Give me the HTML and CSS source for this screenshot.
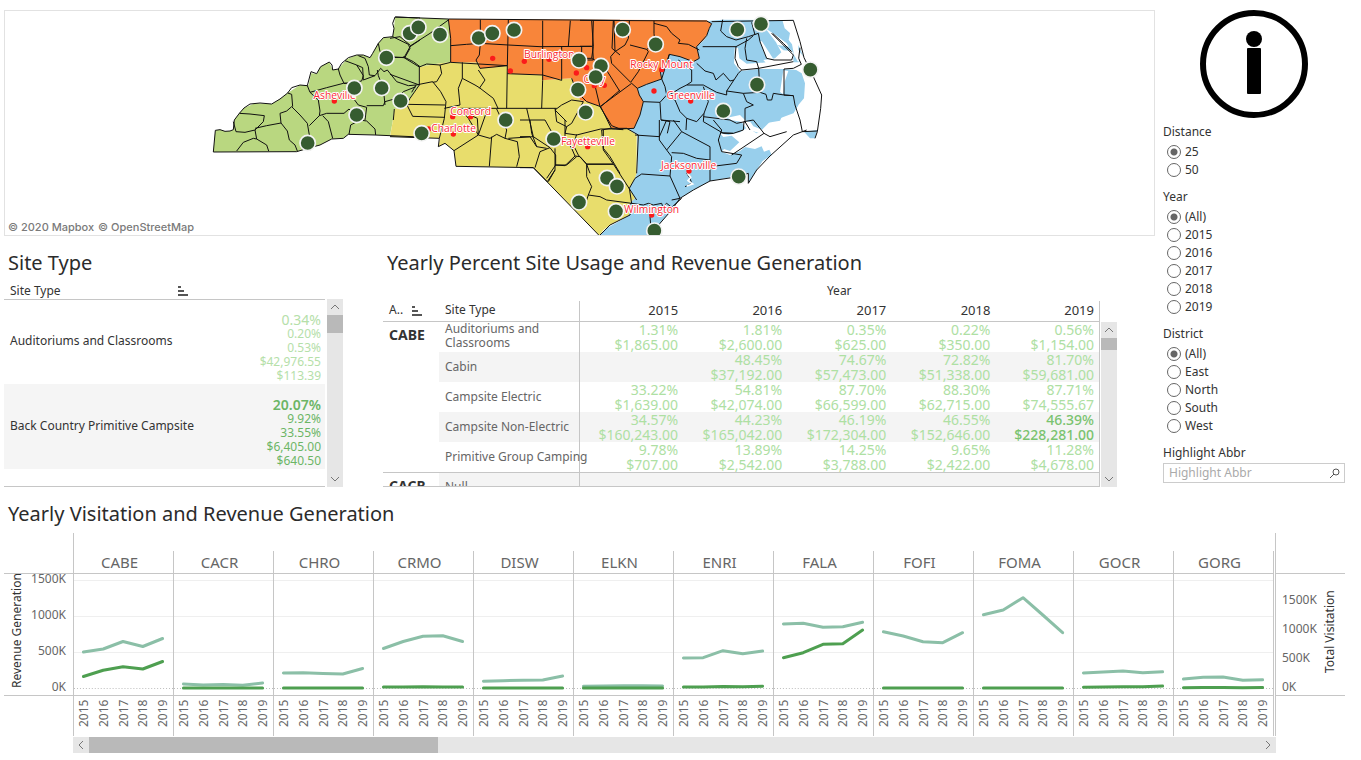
FILE: index.html
```html
<!DOCTYPE html>
<html lang="en">
<head>
<meta charset="utf-8">
<title>Park Visitation and Revenue</title>
<link rel="stylesheet" href="styles.css">
</head>
<body>
<div class="dashboard">
  <div class="main">
    <section class="map" aria-label="District map">
      <svg class="map-canvas" viewBox="15 33 3447 672" preserveAspectRatio="xMidYMid slice">
        <g class="fills">
          <path class="west" transform="translate(600 15)" d="M40 441L46 376L60 374L75 379L90 378L100 374L103 345L118 325L132 309L165 295L215 297L240 282L263 264L300 240L326 240L333 205L350 206L362 185L388 171L398 195L415 192L440 163L470 150L490 150L510 158L518 145L535 115L550 98L578 95L582 70L585 36L745 42L752 100L752 172L720 175L658 186L657 240L640 265L625 290L610 308L583 312L578 350L570 392L525 390L445 388L430 400L395 402L360 420L320 432L290 440Z"/>
          <path class="central" transform="translate(1170 15)" d="M88 186L150 175L182 172L265 172L275 190L352 182L352 206L458 210L455 226L545 220L560 250L570 285L590 290L632 305L660 355L675 374L710 370L740 390L740 505L735 520L718 550L735 580L715 600L725 613L720 630L690 645L660 660L640 675L628 692L430 488L198 484L192 437L165 415L145 425L150 400L0 395L8 350L13 312L40 308L55 290L70 265L88 240Z"/>
          <path class="north" transform="translate(1170 15)" d="M175 42L950 46L965 56L958 70L950 92L942 105L920 125L928 160L910 170L870 155L838 148L832 170L810 195L815 222L770 238L742 250L748 270L760 290L750 330L732 370L690 373L665 370L632 305L590 290L570 285L560 250L545 220L455 226L458 210L352 206L352 182L300 188L270 190L265 172L182 172L182 120Z"/>
          <path class="east" transform="translate(1740 15)" d="M380 48L395 56L388 70L380 92L372 105L350 125L358 160L340 170L300 155L268 148L262 170L240 195L245 222L200 238L172 250L178 270L190 290L180 330L162 370L140 370L172 390L172 500L165 520L148 550L165 580L145 600L155 613L145 632L115 650L80 670L60 692L220 692L240 655L275 615L300 580L340 555L390 528L475 513L505 505L505 535L530 495L548 468L575 450L568 434L552 440L545 424L525 432L490 425L520 400L560 360L575 345L600 340L640 325L655 300L672 280L675 235L665 205L640 190L660 172L655 130L640 90L640 46L428 44Z"/>
          <path class="water" transform="translate(1740 15)" d="M608 48L644 48L656 98L664 142L655 172L642 150L636 118L626 105L630 84L614 70ZM464 130L474 128L478 160L500 176L560 172L660 172L660 196L612 192L536 192L480 198L462 175ZM442 338L480 330L498 348L512 352L520 364L560 380L560 392L500 372L484 350L455 346ZM420 385L445 390L480 382L500 368L530 385L550 380L530 400L480 438L450 450L425 440L432 432L450 438L478 412L455 392L430 396ZM556 70L590 92L620 115L640 145L640 172L560 176L550 165L585 160L604 142L588 112ZM560 160L582 165L545 108L540 112ZM610 196L625 198L614 230L610 268L600 262Z"/>
          <path class="east" transform="translate(1740 15)" d="M512 348L560 354L600 347L612 320L640 325L655 300L600 262L520 270L495 330ZM672 380L712 375L705 400L690 400ZM655 120L672 158L684 180L674 160L655 135ZM592 120L630 125L634 138L610 136Z"/>
        </g>
        <g class="borders">
          <path transform="translate(600 15)" d="M40 441L46 376L60 374L75 379L90 378L100 374L103 345L118 325L132 309L150 297L180 294L215 297L240 282L263 264L275 248L300 240L322 242L333 200L350 206L362 185L388 171L396 180L398 195L415 192L425 175L445 158L470 150L490 150L510 158L518 145L535 115L550 98L578 95L582 70L578 55L585 36L660 39M40 441L290 440L330 428L360 420L395 402L430 400L445 388L525 390L570 392L660 396M118 325L150 327L193 332L190 350L165 375L135 382L108 380L100 350M165 370L200 362L243 354M165 375L170 402L200 420L206 438M110 438L130 412L160 400L170 402M243 354L240 325L260 318L275 305L300 330L322 355L328 390M243 354L262 378L268 405L285 420L292 438M263 264L275 268L278 305M322 242L330 262L355 285L360 318L358 332L328 362M330 262L380 248L430 235L440 235M358 332L380 325L432 325L447 312L465 330M368 332L385 350L398 400M447 388L452 360L480 345L500 348L525 372L527 390M415 192L420 210L432 235L462 232L485 228L490 212L470 180L435 167M475 152L495 160L505 185L508 210L525 212L542 190L552 200L562 195M470 180L488 188L490 225L525 212M535 115L540 140L560 158L615 157L630 130L625 118L578 95M562 195L590 230L625 242L648 240M500 302L550 302L555 290L590 280L610 260L648 245M460 280L475 300L500 307L495 345M580 345L583 312M630 125L660 105M560 180L578 155M610 155L640 170L660 185M532 195L535 212L550 250L555 300"/>
          <path transform="translate(1170 15)" d="M16 36L175 42L182 100L182 172M175 42L690 46M0 100L30 95L62 122L120 85L175 45M62 122L42 158L0 155M42 158L88 186L88 240L0 208M88 240L60 280L50 298L165 300M50 298L68 334L165 337M88 186L110 177L150 180L182 172L352 182M65 262L78 240L128 230L152 260L168 290L163 340L148 400L0 395M150 180L155 205L140 230L128 232M182 122L230 118L270 115L355 120L450 125L605 124M271 44L271 115L268 150L258 165L270 190L352 182L355 44M217 172L217 220L205 250L210 300L163 310M217 220L255 240L268 248L310 280L325 312M268 250L285 225L265 195M458 47L458 226L455 310M352 182L350 310M352 206L458 210L515 226L515 124M541 47L535 124M605 47L610 124L605 160L575 160L575 124M545 220L560 260L590 290L632 305L690 255M605 160L640 180L690 260M670 47L666 130L690 150M210 310L500 310M210 310L235 340L265 390L290 320L300 310M265 390L300 400L320 388L345 400L350 375L320 312M240 330L262 340L265 390L192 437L165 415L145 425L148 400M192 437L198 484L430 488L628 692M305 395L298 484M355 400L430 395L480 428L450 440L435 488M345 400L382 410L388 455L380 485M410 310L430 395M495 310L500 350L530 365L545 355L580 290L545 285L515 300L495 315L530 350M530 365L525 385L560 390L632 372L665 372L632 305M560 388L550 420L565 450L590 478L670 478M480 428L497 450L497 480L470 520M497 480L530 480L560 455M640 375L640 430L660 455L690 505M665 372L700 374M590 478L600 505"/>
          <path transform="translate(1740 15)" d="M0 46L380 48L395 56L388 70L380 92L350 125L358 160L340 170L300 155L268 148L255 190L240 195L245 222L200 238L172 250L155 235L60 305M0 124L38 124L40 47M38 124L40 165L0 165M102 47L105 140L135 120L145 100L148 48M222 48L222 85L225 120L200 133L150 120M222 55L260 65L275 85L300 105L295 115L325 118L358 135M105 140L92 155L95 175L152 232L175 200L205 140L200 133M172 250L178 270L190 290L180 330L162 370L120 372L95 362L60 305L35 200M190 290L240 292L260 270L255 245L245 222L268 148M240 292L243 345L270 350L262 385M260 275L300 250L320 240L335 230L335 195L295 165M320 240L370 240L410 262L440 270L440 258L475 205L485 195L536 190L530 170L500 165L495 130L500 100M368 125L468 125L505 105L520 92M468 125L465 160L475 185L485 195M350 175L375 198L400 205L408 225L430 205L450 228L462 225M395 50L640 46M428 44L422 78L440 95L468 105L505 95L535 85L540 110L560 160L582 165L635 165L640 150L575 85M578 85L610 115L635 140M515 52L525 90M640 46L660 110L672 158L700 215L725 270L722 310L712 380L705 400M660 128L656 160L664 178L640 190L612 192L612 270L640 272M640 170L536 190L540 262L490 265L440 258M540 262L558 268L562 285L575 285L580 265L612 270L640 272L645 300L660 345L667 380L712 378M370 245L385 290L372 325L370 350L430 385L460 385M372 325L350 350L320 340L300 320L285 285L260 275M320 340L318 375M490 265L500 290L520 300L495 310L495 350L470 355L450 345L370 335M495 350L510 375M243 345L300 350"/>
          <path transform="translate(1560 360)" d="M0 50L30 50L50 80L80 85M0 143L40 143M30 0L35 40L50 80M0 0L75 0L100 45M40 143L82 185L105 150L105 85M105 135L135 137L165 108L180 110L200 132L280 132L350 240M105 150L85 185M165 108L155 85L135 50L135 0M200 132L200 170L215 200L205 225L240 230L260 240L335 250L328 205L345 175L365 162L450 168M205 225L200 240L165 265M280 132L250 90L245 30L270 25L320 25L355 45L350 160M345 45L418 50L440 0M335 250L370 255L385 250L400 255L425 250L428 260L440 250L455 262L485 235M335 250L325 255L335 268L330 285L300 300L270 315L240 345M418 0L418 60L440 90L485 35L460 0M440 90L455 110L450 168L480 235L520 210L570 183L655 170L685 160L685 190L710 150L750 108M485 35L570 80L570 183M455 98L490 100L530 115L570 120M570 140L650 130L665 105L605 95L595 60L605 30L580 0M602 38L640 40L670 30L672 5L700 0L732 40L635 105M732 40L750 50L800 35M750 108L820 45L860 30M455 240L480 235L455 270L420 310L400 345M390 290L392 315M500 160L510 175L515 190L495 200"/>
        </g>
        <path class="lagoon" transform="translate(1560 360)" d="M502 160L512 172L504 182L518 192L500 198"/>
        <g class="cities">
          <circle cx="1003" cy="303" r="8"/><circle cx="1478" cy="175" r="8"/><circle cx="1573" cy="184" r="8"/><circle cx="1531" cy="213" r="8"/><circle cx="1647" cy="178" r="8"/><circle cx="1729" cy="219" r="8"/><circle cx="1760" cy="203" r="8"/><circle cx="1783" cy="257" r="8"/><circle cx="1813" cy="256" r="8"/><circle cx="1985" cy="209" r="8"/><circle cx="1962" cy="273" r="8"/><circle cx="2072" cy="303" r="8"/><circle cx="1358" cy="350" r="8"/><circle cx="1402" cy="333" r="8"/><circle cx="1412" cy="350" r="8"/><circle cx="1360" cy="402" r="8"/><circle cx="1286" cy="387" r="8"/><circle cx="1763" cy="440" r="8"/><circle cx="2067" cy="513" r="8"/><circle cx="1955" cy="645" r="8"/>
        </g>
        <g class="city-names">
          <text x="1004" y="298">Asheville</text><text x="1648" y="174">Burlington</text><text x="1985" y="204">Rocky Mount</text><text x="2072" y="298">Greenville</text><text x="1412" y="344">Concord</text><text x="1361" y="396">Charlotte</text><text x="1764" y="435">Fayetteville</text><text x="2066" y="507">Jacksonville</text><text x="1955" y="640">Wilmington</text><text x="1783" y="250">Cary</text>
        </g>
        <g class="sites">
          <circle cx="1229" cy="100" r="23"/><circle cx="1255" cy="82" r="23"/><circle cx="1320" cy="104" r="23"/><circle cx="1159" cy="173" r="23"/><circle cx="1063" cy="264" r="23"/><circle cx="1145" cy="264" r="23"/><circle cx="1202" cy="303" r="23"/><circle cx="1070" cy="345" r="23"/><circle cx="923" cy="429" r="23"/><circle cx="1436" cy="114" r="23"/><circle cx="1477" cy="100" r="23"/><circle cx="1542" cy="90" r="23"/><circle cx="1737" cy="181" r="23"/><circle cx="1803" cy="198" r="23"/><circle cx="1787" cy="231" r="23"/><circle cx="1734" cy="269" r="23"/><circle cx="1757" cy="337" r="23"/><circle cx="1868" cy="89" r="23"/><circle cx="1967" cy="133" r="23"/><circle cx="2212" cy="89" r="23"/><circle cx="2283" cy="72" r="23"/><circle cx="2431" cy="209" r="23"/><circle cx="2271" cy="254" r="23"/><circle cx="2170" cy="333" r="23"/><circle cx="1265" cy="400" r="23"/><circle cx="1517" cy="360" r="23"/><circle cx="1661" cy="417" r="23"/><circle cx="1821" cy="534" r="23"/><circle cx="1851" cy="559" r="23"/><circle cx="1737" cy="607" r="23"/><circle cx="1848" cy="634" r="23"/><circle cx="1963" cy="692" r="23"/><circle cx="2216" cy="530" r="23"/>
        </g>
      </svg>
      <p class="attribution"><a href="#mapbox">© 2020 Mapbox</a><a href="#osm">© OpenStreetMap</a></p>
    </section>

    <div class="tables">
      <section class="site-panel">
        <h2>Site Type</h2>
        <div class="site-head">Site Type
          <svg class="sort" viewBox="0 0 10 10"><path d="M0 1h3M0 5h6M0 9h10"/></svg>
        </div>
        <div class="scroll-area site-scroll">
          <div class="viewport">
            <table class="site-table">
              <tr><th scope="row">Auditoriums and Classrooms</th><td class="light"><div class="lead">0.34%</div><div>0.20%</div><div>0.53%</div><div>$42,976.55</div><div>$113.39</div></td></tr>
              <tr><th scope="row">Back Country Primitive Campsite</th><td class="mid"><div class="lead strong">20.07%</div><div>9.92%</div><div>33.55%</div><div>$6,405.00</div><div>$640.50</div></td></tr>
            </table>
          </div>
          <div class="vbar">
            <button aria-label="Scroll up"><svg viewBox="0 0 16 16"><path d="M4 10l4-4 4 4"/></svg></button>
            <div class="thumb tall"></div>
            <button class="end" aria-label="Scroll down"><svg viewBox="0 0 16 16"><path d="M4 6l4 4 4-4"/></svg></button>
          </div>
        </div>
      </section>

      <section class="usage-panel">
        <h2>Yearly Percent Site Usage and Revenue Generation</h2>
        <div class="usage-body">
          <div class="usage-view">
            <table class="usage-table">
              <colgroup><col class="c-abbr"><col class="c-type"><col><col><col><col><col></colgroup>
              <thead>
                <tr class="span-row"><td colspan="2"></td><th colspan="5">Year</th></tr>
                <tr class="head-row"><th>A.. <svg class="sort" viewBox="0 0 10 10"><path d="M0 1h3M0 5h6M0 9h10"/></svg></th><th>Site Type</th><th>2015</th><th>2016</th><th>2017</th><th>2018</th><th>2019</th></tr>
              </thead>
              <tbody>
                <tr><th class="abbr" rowspan="5">CABE</th><th class="wrap">Auditoriums and Classrooms</th><td>1.31%<br>$1,865.00</td><td>1.81%<br>$2,600.00</td><td>0.35%<br>$625.00</td><td>0.22%<br>$350.00</td><td>0.56%<br>$1,154.00</td></tr>
                <tr class="band"><th>Cabin</th><td></td><td>48.45%<br>$37,192.00</td><td>74.67%<br>$57,473.00</td><td>72.82%<br>$51,338.00</td><td>81.70%<br>$59,681.00</td></tr>
                <tr><th>Campsite Electric</th><td>33.22%<br>$1,639.00</td><td>54.81%<br>$42,074.00</td><td>87.70%<br>$66,599.00</td><td>88.30%<br>$62,715.00</td><td>87.71%<br>$74,555.67</td></tr>
                <tr class="band"><th>Campsite Non-Electric</th><td>34.57%<br>$160,243.00</td><td>44.23%<br>$165,042.00</td><td>46.19%<br>$172,304.00</td><td>46.55%<br>$152,646.00</td><td class="peak">46.39%<br>$228,281.00</td></tr>
                <tr><th>Primitive Group Camping</th><td>9.78%<br>$707.00</td><td>13.89%<br>$2,542.00</td><td>14.25%<br>$3,788.00</td><td>9.65%<br>$2,422.00</td><td>11.28%<br>$4,678.00</td></tr>
                <tr class="band next"><th class="abbr">CACR</th><th>Null</th><td></td><td></td><td></td><td></td><td></td></tr>
              </tbody>
            </table>
          </div>
          <div class="vbar">
            <button aria-label="Scroll up"><svg viewBox="0 0 16 16"><path d="M4 10l4-4 4 4"/></svg></button>
            <div class="thumb"></div>
            <button class="end" aria-label="Scroll down"><svg viewBox="0 0 16 16"><path d="M4 6l4 4 4-4"/></svg></button>
          </div>
        </div>
      </section>
    </div>
  </div>

  <aside class="filters">
    <svg class="info" viewBox="0 0 108 108" role="img" aria-label="Information"><circle class="ring" cx="54" cy="54" r="51"/><circle cx="54" cy="29" r="8"/><rect x="47" y="38" width="14" height="46" rx="1"/></svg>
    <fieldset>
      <legend>Distance</legend>
      <label><input type="radio" name="distance" checked>25</label>
      <label><input type="radio" name="distance">50</label>
    </fieldset>
    <fieldset>
      <legend>Year</legend>
      <label><input type="radio" name="year" checked>(All)</label>
      <label><input type="radio" name="year">2015</label>
      <label><input type="radio" name="year">2016</label>
      <label><input type="radio" name="year">2017</label>
      <label><input type="radio" name="year">2018</label>
      <label><input type="radio" name="year">2019</label>
    </fieldset>
    <fieldset>
      <legend>District</legend>
      <label><input type="radio" name="district" checked>(All)</label>
      <label><input type="radio" name="district">East</label>
      <label><input type="radio" name="district">North</label>
      <label><input type="radio" name="district">South</label>
      <label><input type="radio" name="district">West</label>
    </fieldset>
    <label class="search-label" for="abbr">Highlight Abbr</label>
    <div class="search">
      <input id="abbr" type="text" placeholder="Highlight Abbr">
      <svg viewBox="0 0 12 12"><circle cx="7" cy="5" r="3"/><path d="M5 7L1 11"/></svg>
    </div>
  </aside>

  <section class="trend">
    <h2>Yearly Visitation and Revenue Generation</h2>
    <div class="chart">
      <div class="axis left">
        <div class="axis-title">Revenue Generation</div>
        <div class="ticks"><span>1500K</span><span>1000K</span><span>500K</span><span>0K</span></div>
      </div>
      <div class="panels" id="panels"></div>
      <div class="axis right">
        <div class="ticks"><span>1500K</span><span>1000K</span><span>500K</span><span>0K</span></div>
        <div class="axis-title">Total Visitation</div>
      </div>
    </div>
    <div class="hbar">
      <button aria-label="Scroll left"><svg viewBox="0 0 16 16"><path d="M10 4L6 8l4 4"/></svg></button>
      <div class="thumb"></div>
      <button class="end" aria-label="Scroll right"><svg viewBox="0 0 16 16"><path d="M6 4l4 4-4 4"/></svg></button>
    </div>
  </section>
</div>
<script src="chart.js"></script>
</body>
</html>
```

FILE: styles.css
```css
* { box-sizing: border-box; }
body {
  margin: 0;
  background: #fff;
  color: #333;
  font: 12px/14px "Noto Sans", "Open Sans", sans-serif;
}
h2 { margin: 0; padding-left: 4px; font-size: 20px; line-height: 28px; font-weight: 400; color: #2b2b2b; white-space: nowrap; }
button { padding: 0; border: 0; background: none; }
table { border-collapse: collapse; border-spacing: 0; width: 100%; table-layout: fixed; }
th { font-weight: 400; text-align: left; padding: 0; }
td { padding: 0; text-align: right; }

.dashboard {
  display: grid;
  grid-template-columns: minmax(0, 1fr) 182px;
  column-gap: 8px;
  padding: 10px 16px 0 4px;
}

.map { position: relative; height: 226px; border: 1px solid #e2e2e2; overflow: hidden; }
.map-canvas { display: block; width: 100%; height: 100%; }
.west { fill: #b9d780; }
.north { fill: #f8853a; }
.central { fill: #e8dd6c; }
.east { fill: #98cfec; }
.water { fill: #fff; }
.borders path { fill: none; stroke: #111; stroke-width: 3; stroke-linejoin: round; }
.lagoon { fill: none; stroke: #fff; stroke-width: 5; }
.cities { fill: #fb1b1b; }
.city-names { font: 31px "Open Sans", sans-serif; text-anchor: middle; fill: #fb2a36; stroke: #fff; stroke-width: 6; paint-order: stroke; stroke-linejoin: round; }
.sites circle { fill: #365c30; stroke: #f3f3f3; stroke-width: 5; }
.attribution { position: absolute; left: 3px; bottom: 1px; margin: 0; display: flex; gap: 4px; font: 500 11px/14px Inter, sans-serif; }
.attribution a { color: #7a7a7a; text-decoration: none; }

.tables { display: grid; grid-template-columns: 339fr 734fr; column-gap: 40px; padding: 13px 38px 0 0; }
.sort { width: 10px; height: 10px; fill: none; stroke: #555; stroke-width: 2; }
.site-head { display: flex; align-items: center; justify-content: space-between; height: 23px; padding: 5px 137px 0 6px; margin-right: 18px; border-bottom: 1px solid #c6c6c6; line-height: 18px; }
.scroll-area { display: flex; gap: 2px; height: 188px; }
.site-scroll { margin-top: -1px; }
.viewport { flex: 1; border-bottom: 1px solid #c6c6c6; overflow: hidden; }
.site-table tr { height: 85px; }
.site-table tr:nth-child(2) { background: #f5f5f5; }
.site-table th { width: 70%; padding: 0 0 2px 6px; white-space: nowrap; }
.site-table td { padding: 14px 4px 1px 0; font-size: 12px; }
.site-table .lead { font-size: 14px; }
.light { color: #b5e0a9; }
.mid { color: #6cb566; }
.mid .strong { font-weight: 600; }

.vbar { display: flex; flex-direction: column; width: 16px; background: #e6e6e6; }
.vbar button, .hbar button { width: 16px; height: 16px; }
.vbar svg, .hbar svg { display: block; width: 16px; height: 16px; fill: none; stroke: #777; }
.thumb { background: #b9b9b9; height: 12px; }
.thumb.tall { height: 18px; }
.vbar .end { margin-top: auto; }

.usage-body { display: flex; gap: 1px; height: 210px; }
.usage-body .vbar { margin-top: 45px; }
.usage-view { flex: 1; overflow: hidden; border-bottom: 1px solid #c6c6c6; }
.c-abbr { width: 56px; }
.c-type { width: 140px; }
.span-row { height: 24px; }
.span-row th { padding-top: 3px; text-align: center; }
.head-row { height: 20px; }
.head-row th { padding: 0 5px 2px 0; text-align: right; font-size: 13px; border-bottom: 1px solid #c6c6c6; }
.head-row th:nth-child(-n+2) { padding-left: 6px; text-align: left; font-size: 12px; }
.head-row .sort { margin-left: 6px; vertical-align: -2px; }
.head-row th:nth-child(1) { white-space: nowrap; }
.head-row th:nth-child(2), .usage-table tbody th:not(.abbr) { border-right: 1px solid #c6c6c6; }
.head-row th:last-child, .usage-table tbody td:last-child { border-right: 1px solid #c6c6c6; }
.usage-table tbody tr { height: 30px; }
.usage-table tbody td { padding-right: 5px; font-size: 14px; line-height: 15px; color: #aee0a3; }
.usage-table tbody th { padding-left: 6px; color: #666; white-space: nowrap; }
.usage-table tbody th.wrap { white-space: normal; line-height: 14px; padding: 0 30px 2px 6px; }
.usage-table tbody th.abbr { font-size: 14px; line-height: 26px; font-weight: 700; color: #333; vertical-align: top; background: #fff; }
.usage-table .band { background: #f4f4f4; }
.usage-table .next { border-top: 1px solid #c6c6c6; }
.usage-table tbody td.peak { color: #7ac36f; font-weight: 500; }

.filters { display: flex; flex-direction: column; }
.info { width: 108px; height: 108px; margin-left: 37px; }
.ring { fill: none; stroke: #000; stroke-width: 6; }
fieldset { border: 0; margin: 0 0 8px; padding: 0; min-width: 0; }
fieldset:first-of-type { margin-top: 4px; }
legend, .search-label { padding: 0; line-height: 20px; }
legend { margin-bottom: 1px; }
fieldset label { display: flex; align-items: center; gap: 4px; height: 18px; padding-left: 4px; font-size: 12px; }
fieldset input { appearance: none; width: 14px; height: 14px; margin: 0; border: 1px solid #666; border-radius: 50%; background: #fff; }
fieldset input:checked { background: radial-gradient(circle, #666 3px, #fff 4px); }
.search { display: flex; align-items: center; height: 20px; border: 1px solid #ccc; padding: 0 3px 0 5px; }
.search input { flex: 1; min-width: 0; border: 0; padding: 0; font: inherit; outline: 0; }
.search input::placeholder { color: #aaa; }
.search svg { width: 12px; height: 12px; fill: none; stroke: #555; }

.trend { grid-column: 1 / -1; padding-top: 13px; }
.chart { display: grid; grid-template-columns: 69px minmax(0, 1fr) 69px; margin-top: 5px; }
.axis { display: flex; height: 163px; margin-bottom: 40px; padding-top: 41px; background: linear-gradient(#c6c6c6, #c6c6c6) 0 40px / 100% 1px no-repeat; border-bottom: 1px solid #c6c6c6; color: #666; overflow: hidden; }
.axis.left { justify-content: space-between; padding-right: 7px; }
.axis.right { justify-content: space-between; padding-left: 6px; }
.axis-title { writing-mode: vertical-rl; transform: rotate(180deg); width: 18px; line-height: 18px; color: #333; white-space: nowrap; }
.left .axis-title { margin-left: 4px; height: 114px; }
.right .axis-title { margin-right: 6px; height: 99px; }
.ticks { display: flex; flex-direction: column; }
.left .ticks { margin-top: -13px; text-align: right; }
.left .ticks span { line-height: 36px; }
.right .ticks { padding-top: 11px; }
.right .ticks span { line-height: 29px; }
.panels { display: grid; grid-template-columns: repeat(12, minmax(0, 1fr)); border-left: 1px solid #c6c6c6; border-right: 1px solid #c6c6c6; padding: 18px 1px 0 0; }
.panel { border-right: 1px solid #c6c6c6; }
.panel-name { height: 23px; padding-right: 8px; text-align: center; font-size: 15px; line-height: 22px; color: #666; border-bottom: 1px solid #c6c6c6; }
.plot { display: block; width: 100%; height: 122px; border-bottom: 1px solid #c6c6c6; }
.plot path { fill: none; }
.plot .grid { stroke: #efefef; }
.plot .zero { stroke: #bbb; stroke-dasharray: 1 2; }
.plot .visits { stroke: #8bbfa7; stroke-width: 3; stroke-linejoin: round; stroke-linecap: round; }
.plot .revenue { stroke: #4e9f50; stroke-width: 3; stroke-linejoin: round; stroke-linecap: round; }
.years { display: grid; grid-template-columns: repeat(5, 1fr); height: 40px; color: #666; }
.years span { writing-mode: vertical-rl; transform: rotate(180deg); display: flex; align-items: center; justify-content: flex-end; line-height: 18px; padding-bottom: 4px; }
.hbar { display: flex; height: 16px; margin: 1px 69px 0; background: #e6e6e6; }
.hbar .thumb { height: 16px; width: 29%; }
.hbar .end { margin-left: auto; }
```

FILE: chart.js
```js
// Vertical positions of each year's value within a 100 x 121 panel.
const flat = [114, 114, 114, 114, 114];
const parks = [
  ["CABE", [78, 75, 67.5, 72.5, 64.5], [102.5, 96.3, 92.7, 95, 87.5]],
  ["CACR", [110, 111, 110.5, 111.3, 109], flat],
  ["CHRO", [99, 98.7, 99.5, 100, 94.5], flat],
  ["CRMO", [74.5, 67.5, 62.3, 61.7, 67.5], [113, 113, 112.7, 113, 113]],
  ["DISW", [107.3, 106.7, 106.3, 106, 102], flat],
  ["ELKN", [112.3, 112, 111.7, 111.7, 112], flat],
  ["ENRI", [84, 83.7, 76.7, 79.7, 77], [113, 113, 112.5, 112.8, 112.3]],
  ["FALA", [50, 49.3, 53.3, 52.7, 48.3], [83.7, 78.7, 70.3, 69.7, 56]],
  ["FOFI", [57.7, 62, 67.7, 68.7, 58.7], flat],
  ["FOMA", [40.7, 36, 23.7, 41, 58.7], flat],
  ["GOCR", [99, 98, 97, 98.7, 97.7], [113.3, 113, 112.7, 112.7, 112]],
  ["GORG", [105, 103.3, 103, 106.3, 105.7], [113.7, 113.6, 113.5, 113.8, 113.6]]
];
const years = [2015, 2016, 2017, 2018, 2019];
const line = ys => "M" + ys.map((y, i) => (9.5 + i * 20) + " " + y).join("L");

document.getElementById("panels").innerHTML = parks.map(([name, visits, revenue]) => `
  <div class="panel">
    <div class="panel-name">${name}</div>
    <svg class="plot" viewBox="0 0 100 121" preserveAspectRatio="none">
      <path class="grid" d="M0 6.5H100M0 42.5H100M0 78.5H100"/>
      <path class="zero" d="M0 114.5H100"/>
      <path class="visits" d="${line(visits)}"/>
      <path class="revenue" d="${line(revenue)}"/>
    </svg>
    <div class="years">${years.map(y => `<span>${y}</span>`).join("")}</div>
  </div>`).join("");
```
